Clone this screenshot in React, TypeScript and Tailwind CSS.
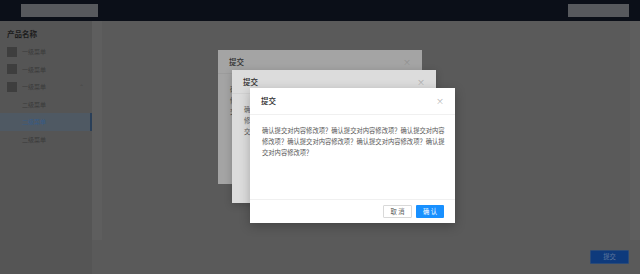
const text = '确认提交对内容修改项？'.repeat(6)

const menu = [
  { label: '一级菜单', icon: true },
  { label: '一级菜单', icon: true },
  { label: '一级菜单', icon: true, open: true },
  { label: '二级菜单' },
  { label: '二级菜单', active: true },
  { label: '二级菜单' },
]

const Sidebar = () => (
  <div className="flex w-[92px] shrink-0 flex-col bg-[#555555]">
    <div className="flex h-[18px] items-center pl-[7px] mt-[4px] text-[7.5px] font-bold text-[#1c1c1c]">产品名称</div>
    {menu.map((item, i) => (
      <div
        key={i}
        className={
          item.active
            ? 'relative flex h-[17.5px] items-center bg-[#4f5963] pl-[22px] text-[6px] text-[#365b86]'
            : 'relative flex h-[17.5px] items-center pl-[7px] text-[6px] text-[#3a3a3a]'
        }
      >
        {item.icon && <span className="mr-[5px] h-[10px] w-[10px] bg-[#3e3e3e]" />}
        {!item.icon && !item.active && <span className="w-[15px]" />}
        {item.label}
        {item.open && <span className="absolute right-[8px] top-[4px] text-[6px] text-[#464646]">⌃</span>}
        {item.active && <span className="absolute right-0 top-0 h-full w-[2px] bg-[#2a3f58]" />}
      </div>
    ))}
  </div>
)

interface ModalProps {
  box: string
  head: string
  title: string
  close: string
  body: string
  line: string
  footer?: boolean
}

const Modal = ({ box, head, title, close, body, line, footer }: ModalProps) => (
  <div className={`absolute flex flex-col ${box}`}>
    <div className={`flex items-center justify-between border-b px-[11px] ${head} ${line}`}>
      <span className={`text-[7.5px] font-medium ${title}`}>提交</span>
      <span className={`text-[8px] ${close}`}>×</span>
    </div>
    <div className={`flex-1 px-[12px] pt-[10px] text-[6.3px] leading-[11px] ${body}`}>
      <p className="w-[184px]">{text}</p>
    </div>
    {footer && (
      <div className="flex h-[24px] items-center justify-end gap-[4px] border-t border-[#f0f0f0] pr-[11px]">
        <button className="h-[13px] w-[29px] rounded-[1px] border border-[#d9d9d9] bg-white text-[6.3px] text-[#595959]">取 消</button>
        <button className="h-[13px] w-[28px] rounded-[1px] bg-[#1890ff] text-[6.3px] text-white">确 认</button>
      </div>
    )}
  </div>
)

export default function App() {
  return (
    <div className="relative h-[274px] w-[640px] overflow-hidden bg-[#5a5a5a] font-['Noto_Sans_CJK_SC',sans-serif]">
      <header className="flex h-[21px] items-center justify-between bg-[#0b0f18] pl-[21px] pr-[11px]">
        <div className="h-[13px] w-[77px] bg-[#57595d]" />
        <div className="h-[13px] w-[61px] bg-[#57595d]" />
      </header>
      <div className="flex h-[253px]">
        <Sidebar />
        <div className="h-[219px] w-[10px] bg-[#5e5e5e]" />
        <div className="flex flex-1 flex-col">
          <div className="flex h-[219px]">
            <div className="flex-1" />
            <div className="w-[10px] bg-[#5e5e5e]" />
          </div>
          <div className="flex flex-1 items-start justify-end pr-[11px] pt-[10px]">
            <button className="h-[14px] w-[39px] rounded-[1px] border border-[#2a4a78] bg-[#0e3a7c] text-[6.3px] text-[#5f789c]">提交</button>
          </div>
        </div>
      </div>

      <Modal
        box="left-[218px] top-[50px] h-[134px] w-[204px] bg-[#a4a4a4]"
        head="h-[24px]"
        title="text-[#2e2e2e]"
        close="text-[#8e8e8e]"
        body="text-[#4a4a4a]"
        line="border-[#9c9c9c]"
      />
      <Modal
        box="left-[232px] top-[70px] h-[133px] w-[204px] bg-[#dcdcdc] shadow-[0_2px_8px_rgba(0,0,0,0.2)]"
        head="h-[24px]"
        title="text-[#2a2a2a]"
        close="text-[#a8a8a8]"
        body="text-[#5a5a5a]"
        line="border-[#d2d2d2]"
      />
      <Modal
        box="left-[250px] top-[88px] h-[135px] w-[205px] bg-white shadow-[0_3px_10px_rgba(0,0,0,0.25)]"
        head="h-[27px]"
        title="text-[#262626]"
        close="text-[#b0b0b0]"
        body="text-[#555555]"
        line="border-[#f0f0f0]"
        footer
      />
    </div>
  )
}
